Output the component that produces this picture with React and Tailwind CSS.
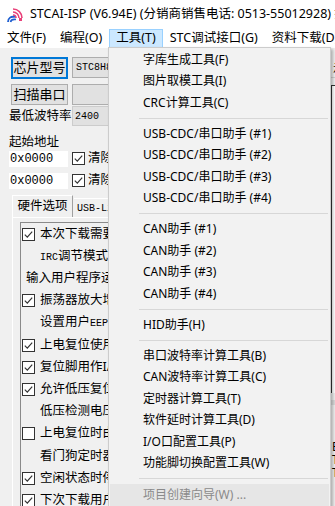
import React from "react";

const ui = "font-['Noto_Sans','Noto_Sans_CJK_SC',sans-serif]";
const mono = "font-['Liberation_Mono','Noto_Sans_CJK_SC',monospace]";

function Check({ checked }) {
  return (
    <span className="flex h-[13px] w-[13px] shrink-0 items-center justify-center border border-[#333] bg-white">
      {checked && (
        <svg width="11" height="11" viewBox="0 0 11 11">
          <path d="M1.8 5.6 L4.3 8.1 L9.2 2.6" stroke="#333" strokeWidth="1.2" fill="none" />
        </svg>
      )}
    </span>
  );
}

function Logo() {
  return (
    <svg width="16" height="16" viewBox="0 0 16 16" className="shrink-0">
      <path d="M6 2 A9 9 0 0 1 15 11" stroke="#e8417a" strokeWidth="1.6" fill="none" />
      <path d="M6 5 A6 6 0 0 1 12 11" stroke="#e8417a" strokeWidth="1.6" fill="none" />
      <path d="M6 8 A3 3 0 0 1 9 11" stroke="#e8417a" strokeWidth="1.6" fill="none" />
      <rect x="12" y="11" width="3" height="3" fill="#e8417a" />
      <path d="M8 10 C4 9 1 11 1 15" stroke="#1f5fd1" strokeWidth="1.8" fill="none" />
      <path d="M9 12.5 C6 12 4 13 3.5 15" stroke="#1f5fd1" strokeWidth="1.6" fill="none" />
    </svg>
  );
}

const menuItems = [
  "字库生成工具(F)",
  "图片取模工具(I)",
  "CRC计算工具(C)",
  "-",
  "USB-CDC/串口助手 (#1)",
  "USB-CDC/串口助手 (#2)",
  "USB-CDC/串口助手 (#3)",
  "USB-CDC/串口助手 (#4)",
  "-",
  "CAN助手 (#1)",
  "CAN助手 (#2)",
  "CAN助手 (#3)",
  "CAN助手 (#4)",
  "-",
  "HID助手(H)",
  "-",
  "串口波特率计算工具(B)",
  "CAN波特率计算工具(C)",
  "定时器计算工具(T)",
  "软件延时计算工具(D)",
  "I/O口配置工具(P)",
  "功能脚切换配置工具(W)",
  "-",
];

// rows inside the 硬件选项 page: [kind, text]
const options = [
  ["c", "本次下载需要修改硬件选项"],
  ["i", "IRC调节模式"],
  ["l", "输入用户程序运行时的IRC频率"],
  ["c", "振荡器放大增益"],
  ["i", "设置用户EEPROM大小"],
  ["c", "上电复位使用较长延时"],
  ["c", "复位脚用作I/O口"],
  ["c", "允许低压复位"],
  ["i", "低压检测电压"],
  ["u", "上电复位时由硬件启动看门狗"],
  ["i", "看门狗定时器分频系数"],
  ["c", "空闲状态时停止看门狗计数"],
  ["c", "下次下载用户程序时擦除EEPROM"],
];

function ToolsMenu() {
  return (
    <div className="absolute left-[108px] top-[47px] w-[223px] border border-[#cccccc] bg-[#f2f2f2] pt-[1px] text-[12px] text-black shadow-[2px_2px_3px_rgba(0,0,0,0.28)]">
      {menuItems.map((t, i) =>
        t === "-" ? (
          <div key={i} className="flex h-[9.5px] items-center pl-[30px] pr-[2px]">
            <div className="h-px w-full bg-[#d7d7d7]" />
          </div>
        ) : (
          <div key={i} className="flex h-[21.5px] items-center whitespace-nowrap pl-[34px]">
            {t}
          </div>
        )
      )}
      <div className="mx-[1px] flex h-[23px] items-center whitespace-nowrap bg-[#e6e6e6] pl-[33px] text-[#8a8a8a]">
        项目创建向导(W) ...
      </div>
    </div>
  );
}

export default function App() {
  return (
    <div className={`relative h-[506px] w-[335px] overflow-hidden bg-[#f0f0f0] ${ui}`}>
      {/* title bar */}
      <div className="flex h-[29px] items-center gap-[7px] whitespace-nowrap bg-white pl-[7px] text-[12.5px] text-black">
        <Logo />
        <span>STCAI-ISP (V6.94E) (分销商销售电话: 0513-55012928) 技术支持</span>
      </div>

      {/* menu bar */}
      <div className="flex h-[19px] items-stretch whitespace-nowrap bg-white text-[12.5px] text-black">
        <div className="flex items-center px-[7px]">文件(F)</div>
        <div className="flex items-center px-[7px]">编程(O)</div>
        <div className="flex items-center border border-[#99d1ff] bg-[#cce8ff] px-[6px]">工具(T)</div>
        <div className="flex items-center px-[7px]">STC调试接口(G)</div>
        <div className="flex items-center px-[7px]">资料下载(D)</div>
      </div>

      <div className="flex">
        {/* left panel */}
        <div className="w-[331px] shrink-0 pt-[9px] text-[12px] text-black">
          <div className="flex gap-[4px] pl-[11px]">
            <div className="flex h-[22px] w-[57px] items-center justify-center border-2 border-[#0078d7] bg-[#e1e1e1] text-[13px]">芯片型号</div>
            <div className={`flex h-[21px] flex-1 items-center border border-[#adadad] bg-[#e1e1e1] pl-[3px] text-[10px] ${mono}`}>STC8H8K64U</div>
          </div>
          <div className="mt-[5px] flex gap-[4px] pl-[11px]">
            <div className="flex h-[21px] w-[57px] items-center justify-center border border-[#adadad] bg-[#e1e1e1] text-[13px]">扫描串口</div>
            <div className="h-[21px] flex-1 border border-[#adadad] bg-[#e1e1e1]" />
          </div>
          <div className="mt-[1px] flex items-center pl-[9px]">
            <span className="w-[63px] text-[12.5px]">最低波特率</span>
            <div className={`flex h-[20px] flex-1 items-center border border-[#cccccc] bg-[#e1e1e1] pl-[2px] text-[10px] ${mono}`}>2400</div>
          </div>
          <div className="mt-[7px] h-[17px] pl-[9px] text-[12.5px] leading-[17px]">起始地址</div>
          {[0, 1].map((k) => (
            <div key={k} className={`flex h-[17px] items-center pl-[9px] ${k ? "mt-[5px]" : ""}`}>
              <div className={`flex h-[16px] w-[59px] items-center bg-white pl-[1px] text-[12px] ${mono}`}>0x0000</div>
              <span className="ml-[4px]"><Check checked /></span>
              <span className="ml-[3px] whitespace-nowrap text-[12.5px]">清除代码缓冲区</span>
            </div>
          ))}

          {/* tabs */}
          <div className="mt-[6px] flex h-[22px] items-end pl-[12px]">
            <div className="flex h-[22px] w-[61px] items-center justify-center border-l border-t border-r border-l-white border-t-white border-r-[#a0a0a0] text-[12.5px]">硬件选项</div>
            <div className={`ml-[1px] flex h-[19px] items-center border-t border-r border-t-white border-r-[#a0a0a0] pl-[3px] pr-[6px] text-[10px] ${mono}`}>USB-Link1D</div>
            <div className={`flex h-[19px] items-center border-t border-r border-t-white border-r-[#a0a0a0] px-[5px] text-[10px] ${mono}`}>程序加密后传输</div>
          </div>
          <div className="ml-[12px] border-l border-t border-white pl-[7px] pt-[4px]">
            <div className="border-l border-t border-[#8a8a8a]">
              {options.map(([k, t], i) => (
                <div key={i} className="flex h-[22.2px] items-center whitespace-nowrap text-[12.5px]">
                  {k === "c" || k === "u" ? (
                    <span className="flex items-center gap-[5px] pl-[1px]">
                      <Check checked={k === "c"} />
                      {t}
                    </span>
                  ) : k === "i" ? (
                    <span className="pl-[19px]">
                      {t.startsWith("IRC") ? (
                        <>
                          <span className={`text-[10px] ${mono}`}>IRC</span>调节模式
                        </>
                      ) : t.includes("EEPROM") ? (
                        <>
                          设置用户<span className={`text-[10px] ${mono}`}>EEPROM</span>大小
                        </>
                      ) : (
                        t
                      )}
                    </span>
                  ) : (
                    <span className="pl-[5px]">{t}</span>
                  )}
                </div>
              ))}
            </div>
          </div>
        </div>

        {/* edge of the right-hand pane, mostly hidden behind the menu */}
        <div className="flex-1 text-[12px]">
          <div className="mt-[12px] h-[18px] whitespace-nowrap border-b border-[#d0d0d0] pl-[2px]">示</div>
          <div className="mt-[7px] h-[308px] border-l border-t border-[#333] bg-white" />
          <div className="mt-[7px] h-[5px] bg-[#dcdcdc]" />
          <div className="mt-[35px] whitespace-nowrap pl-[1px] leading-[13px]">
            <div>E</div>
            <div>T</div>
            <div>T</div>
          </div>
        </div>
      </div>

      <ToolsMenu />
    </div>
  );
}
